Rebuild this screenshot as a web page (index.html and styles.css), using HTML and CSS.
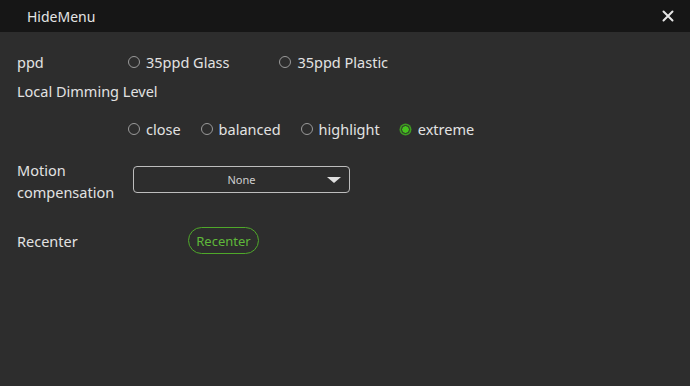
FILE: index.html
```html
<!DOCTYPE html>
<html lang="en">
<head>
    <meta charset="UTF-8">
    <meta name="viewport" content="width=device-width, initial-scale=1.0">
    <title>HideMenu</title>
    <link rel="stylesheet" href="styles.css">
</head>
<body>
    <div class="titlebar">
        <span class="title">HideMenu</span>
        <svg class="close" width="12" height="12" viewBox="0 0 12 12">
            <path d="M1.5 1.5 L10.5 10.5 M10.5 1.5 L1.5 10.5" stroke="#e6e6e6" stroke-width="2" stroke-linecap="round"/>
        </svg>
    </div>

    <div class="panel">
        <div class="row row-ppd">
            <span class="label">ppd</span>
            <label class="radio"><span class="dot"></span>35ppd Glass</label>
            <label class="radio radio-wide"><span class="dot"></span>35ppd Plastic</label>
        </div>

        <div class="row row-title">
            <span class="label label-long">Local Dimming Level</span>
        </div>

        <div class="row row-dim">
            <span class="label"></span>
            <label class="radio"><span class="dot"></span>close</label>
            <label class="radio"><span class="dot"></span>balanced</label>
            <label class="radio"><span class="dot"></span>highlight</label>
            <label class="radio"><span class="dot on"></span>extreme</label>
        </div>

        <div class="row row-motion">
            <span class="label">Motion<br>compensation</span>
            <div class="select">
                <span class="select-text">None</span>
                <span class="caret"></span>
            </div>
        </div>

        <div class="row row-recenter">
            <span class="label">Recenter</span>
            <button class="btn-recenter">Recenter</button>
        </div>
    </div>
</body>
</html>
```

FILE: styles.css
```css
body {
    font-family: 'Noto Sans', sans-serif;
    background-color: #2d2d2d;
    color: #e2e2e2;
    margin: 0;
    padding: 0;
}

.titlebar {
    height: 32px;
    background-color: #161616;
    display: flex;
    align-items: center;
    justify-content: space-between;
    padding: 0 16px 0 27px;
}

.title {
    font-size: 14px;
    color: #e4e4e4;
}

.close {
    display: block;
}

.panel {
    padding: 18px 0 0 17px;
}

.row {
    display: flex;
    align-items: center;
    font-size: 14.5px;
}

.label {
    width: 111px;
    flex-shrink: 0;
    line-height: 22px;
}

.label-long {
    width: auto;
}

.row-ppd {
    height: 24px;
}

.row-title {
    height: 24px;
    margin-top: 5px;
}

.row-dim {
    height: 24px;
    margin-top: 14px;
}

.row-motion {
    margin-top: 18px;
    align-items: flex-start;
}

.row-recenter {
    margin-top: 24px;
}

.radio {
    display: flex;
    align-items: center;
    margin-right: 20px;
}

.radio-wide {
    margin-left: 30px;
}

.dot {
    width: 10px;
    height: 10px;
    border: 1.2px solid #9a9a9a;
    border-radius: 50%;
    margin-right: 6px;
    box-sizing: content-box;
}

.dot.on {
    width: 7px;
    height: 7px;
    background-color: #46c21e;
    border: 1px solid #2d2d2d;
    box-shadow: 0 0 0 1.5px #3e9a22;
    margin-left: 1px;
    margin-right: 8px;
}

.select {
    margin-left: 5px;
    margin-top: 7px;
    width: 215px;
    height: 25px;
    border: 1.5px solid #bdbdbd;
    border-radius: 4px;
    display: flex;
    align-items: center;
    justify-content: center;
    position: relative;
}

.select-text {
    font-size: 11px;
    color: #cfcfcf;
}

.caret {
    position: absolute;
    right: 8px;
    top: 10px;
    width: 0;
    height: 0;
    border-left: 7px solid transparent;
    border-right: 7px solid transparent;
    border-top: 6px solid #e0e0e0;
}

.btn-recenter {
    margin-left: 60px;
    font-family: 'Noto Sans', sans-serif;
    font-size: 13px;
    color: #5fb83a;
    background: transparent;
    border: 1.5px solid #4fa82a;
    border-radius: 14px;
    width: 71px;
    height: 27px;
    padding: 0;
}
```
